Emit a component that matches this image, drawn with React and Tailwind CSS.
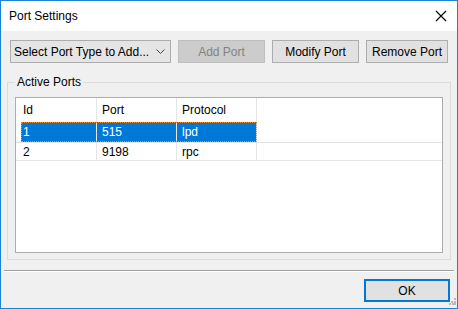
import React from 'react';

const font = { fontFamily: '"Liberation Sans", Arial, sans-serif' };

function Btn({ children, className = '' }) {
  return (
    <div className={`h-[23px] flex items-center justify-center border border-[#adadad] bg-[#e1e1e1] text-[12px] text-black ${className}`}>
      {children}
    </div>
  );
}

function Row({ cells, selected, className = '' }) {
  return (
    <div className={`flex border-b border-[#e5e5e5] ${className}`}>
      <div className="w-[5px]" />
      <div
        className={`flex ${selected ? 'bg-[#0078d7] text-white outline outline-1 outline-dotted outline-[#f0902a] -outline-offset-1' : ''}`}
      >
        <div className="w-[76px] pl-[2px] flex items-center border-r border-[#e5e5e5]">{cells[0]}</div>
        <div className="w-[80px] pl-[5px] flex items-center border-r border-[#e5e5e5]">{cells[1]}</div>
        <div className="w-[80px] pl-[5px] flex items-center border-r border-[#e5e5e5]">{cells[2]}</div>
      </div>
    </div>
  );
}

export default function App() {
  return (
    <div style={font} className="w-[458px] h-[309px] border border-[#1883d7] flex flex-col bg-[#f0f0f0] text-[12px] text-black overflow-hidden">
      {/* Title bar */}
      <div className="h-[30px] bg-white flex items-center justify-between pl-[8px]">
        <span className="text-[12px]">Port Settings</span>
        <div className="w-[30px] h-[30px] mr-[1px] flex items-center justify-center">
          <svg width="12" height="12" viewBox="0 0 12 12">
            <path d="M1 1L11 11M11 1L1 11" stroke="#000" strokeWidth="1.1" />
          </svg>
        </div>
      </div>

      {/* Toolbar */}
      <div className="flex mt-[9px] pl-[9px]">
        <div className="w-[161px] h-[23px] flex items-center justify-between border border-[#acacac] bg-[#e5e5e5] pl-[3px] pr-[5px]">
          <span>Select Port Type to Add...</span>
          <svg width="9" height="6" viewBox="0 0 9 6">
            <path d="M0.5 0.5L4.5 4.5L8.5 0.5" stroke="#444" fill="none" strokeWidth="1" />
          </svg>
        </div>
        <div className="ml-[7px] w-[87px] h-[23px] flex items-center justify-center border border-[#bfbfbf] bg-[#cccccc] text-[#838383]">
          Add Port
        </div>
        <Btn className="ml-[7px] w-[87px]">Modify Port</Btn>
        <Btn className="ml-[7px] w-[82px]">Remove Port</Btn>
      </div>

      {/* Group box */}
      <div className="relative mt-[19px] ml-[6px] w-[444px] h-[178px] border border-[#dcdcdc]">
        <span className="absolute left-[7px] -top-[8px] px-[2px] bg-[#f0f0f0] leading-[14px]">Active Ports</span>
        <div className="mt-[14px] ml-[7px] w-[428px] h-[156px] border border-[#adadad] bg-white">
          <div className="flex h-[24px]">
            <div className="w-[5px]" />
            <div className="w-[76px] pl-[2px] flex items-center border-r border-[#e5e5e5]">Id</div>
            <div className="w-[80px] pl-[5px] flex items-center border-r border-[#e5e5e5]">Port</div>
            <div className="w-[80px] pl-[5px] flex items-center border-r border-[#e5e5e5]">Protocol</div>
          </div>
          <Row className="h-[21px]" cells={['1', '515', 'lpd']} selected />
          <Row className="h-[18px]" cells={['2', '9198', 'rpc']} />
        </div>
      </div>

      {/* Separator */}
      <div className="mt-[10px] ml-[3px] w-[450px] h-[2px] border-t border-[#a0a0a0] border-b border-b-white" />

      {/* Footer */}
      <div className="relative flex justify-end pr-[7px] mt-[7px]">
        <div className="w-[86px] h-[23px] flex items-center justify-center border-2 border-[#0078d7] bg-[#e1e1e1]">OK</div>
        <svg className="absolute right-[1px] top-[19px]" width="7" height="7" viewBox="0 0 7 7">
          <rect x="5" y="0" width="2" height="2" fill="#b8b8b8" />
          <rect x="2" y="3" width="2" height="2" fill="#b8b8b8" />
          <rect x="5" y="3" width="2" height="2" fill="#b8b8b8" />
          <rect x="0" y="5" width="2" height="2" fill="#b8b8b8" />
          <rect x="3" y="5" width="2" height="2" fill="#b8b8b8" />
          <rect x="5" y="5" width="2" height="2" fill="#b8b8b8" />
        </svg>
      </div>
    </div>
  );
}
